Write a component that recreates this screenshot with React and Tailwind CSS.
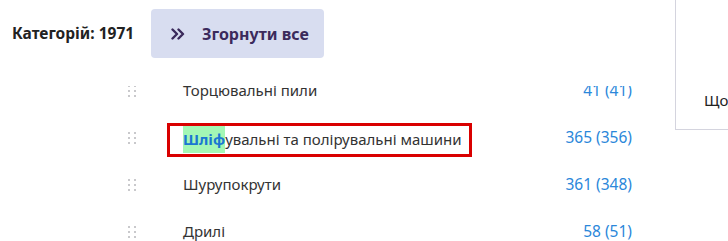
import React from "react";

const rows = [
  { name: "Торцювальні пили", count: "41 (41)" },
  { name: "Шліфувальні та полірувальні машини", count: "365 (356)", hit: "Шліф" },
  { name: "Шурупокрути", count: "361 (348)" },
  { name: "Дрилі", count: "58 (51)" },
];

const Handle = () => (
  <div className="grid grid-cols-2 gap-x-[4px] gap-y-[3px] w-[8px] shrink-0">
    {[0, 1, 2, 3, 4, 5].map((i) => (
      <span key={i} className="w-[2px] h-[2px] bg-[#c9c9cc]" />
    ))}
  </div>
);

const App = () => {
  return (
    <div className="w-[728px] h-[241px] overflow-hidden bg-white flex font-['Noto_Sans',sans-serif]">
      <div className="w-[675px] shrink-0 flex flex-col">
        {/* header */}
        <div className="h-[86px] shrink-0 flex items-start relative z-10 bg-white">
          <div className="ml-3 mt-[22px] w-[139px] shrink-0 text-[15.5px] font-bold text-[#222] whitespace-nowrap">
            Категорій: 1971
          </div>
          <div className="mt-[9px] h-[49px] w-[173px] shrink-0 rounded-[4px] bg-[#d8ddf0] flex items-center pl-[20px] text-[#3b2a5c] cursor-pointer">
            <svg width="14" height="12" viewBox="0 0 14 12" fill="none" stroke="currentColor" strokeWidth="2.4" strokeLinecap="round" strokeLinejoin="round" className="shrink-0">
              <path d="M1.5 1.5 L6 6 L1.5 10.5" />
              <path d="M7.5 1.5 L12 6 L7.5 10.5" />
            </svg>
            <span className="ml-[17px] text-[16px] font-bold whitespace-nowrap">Згорнути все</span>
          </div>
        </div>

        {/* list */}
        <div className="flex-1 overflow-hidden">
          <div className="-mt-[19px]">
            {rows.map((r) => (
              <div key={r.name} className="h-[47px] flex items-center pl-[128px] pr-[43px]">
                <Handle />
                <div className="flex-1 pl-[47px] text-[15px] text-[#333] whitespace-nowrap">
                  {r.hit ? (
                    <span className="inline-flex items-center -ml-[16px] pl-[13px] w-[305px] h-[34px] mt-[4px] border-[3px] border-[#d90000]">
                      <span className="bg-[#a3f7b5] text-[#1a78d2] font-bold py-[2px]">{r.hit}</span>
                      <span>{r.name.slice(r.hit.length)}</span>
                    </span>
                  ) : (
                    r.name
                  )}
                </div>
                <div className="text-[15.5px] text-[#2b87da] whitespace-nowrap">{r.count}</div>
              </div>
            ))}
          </div>
        </div>
      </div>

      {/* side panel */}
      <div className="w-[53px] h-[130px] shrink-0 border-l border-b border-[#d4d4de] overflow-hidden">
        <div className="pt-[89px] pl-[28px] text-[15px] text-[#222] whitespace-nowrap">Щодо</div>
      </div>
    </div>
  );
};

export default App;
